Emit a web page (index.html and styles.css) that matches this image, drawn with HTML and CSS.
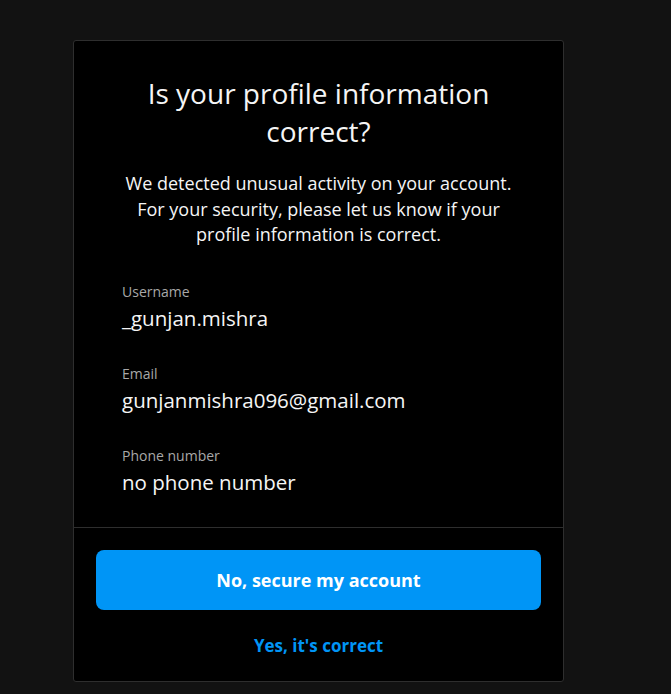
FILE: index.html
```html
<!DOCTYPE html>
<html>
<head>
  <title>Confirm your profile</title>
  <link rel="stylesheet" href="styles.css">
</head>
<body>
<div class="card">
  <div class="card-top">
    <h1 class="title">Is your profile information correct?</h1>
    <p class="intro">We detected unusual activity on your account. For your security, please let us know if your profile information is correct.</p>

    <div class="field">
      <div class="field-label">Username</div>
      <div class="field-value">_gunjan.mishra</div>
    </div>
    <div class="field">
      <div class="field-label">Email</div>
      <div class="field-value">gunjanmishra096@gmail.com</div>
    </div>
    <div class="field">
      <div class="field-label">Phone number</div>
      <div class="field-value">no phone number</div>
    </div>
  </div>

  <div class="card-actions">
    <button type="button" class="primary-button">No, secure my account</button>
    <button type="button" class="link-button">Yes, it's correct</button>
  </div>
</div>
</body>
</html>
```

FILE: styles.css
```css
body {
  margin: 0;
  background-color: #121212;
  font-family: "Open Sans", "Noto Sans", sans-serif;
  color: #f5f5f5;
}

.card {
  width: 489px;
  margin: 40px 0 0 73px;
  background-color: #000;
  border: 1px solid #2e2e2e;
  border-radius: 3px;
}

.card-top {
  padding: 33px 48px 30px 48px;
  border-bottom: 1px solid #2e2e2e;
}

.title {
  margin: 0 20px;
  font-size: 28px;
  font-weight: 400;
  line-height: 38px;
  text-align: center;
}

.intro {
  margin: 21px 0 33px 0;
  font-size: 18px;
  line-height: 25.5px;
  text-align: center;
}

.field {
  margin-bottom: 30px;
}

.field:last-child {
  margin-bottom: 0;
}

.field-label {
  font-size: 14px;
  line-height: 22px;
  color: #a8a8a8;
}

.field-value {
  font-size: 20.5px;
  line-height: 30px;
}

.card-actions {
  padding: 22px 22px 20px 22px;
  display: flex;
  flex-direction: column;
  align-items: stretch;
}

.primary-button {
  height: 60px;
  border: none;
  border-radius: 8px;
  background-color: #0095f6;
  color: #fff;
  font-family: inherit;
  font-size: 18px;
  font-weight: 700;
  cursor: pointer;
}

.link-button {
  margin-top: 21px;
  border: none;
  background-color: transparent;
  color: #0095f6;
  font-family: inherit;
  font-size: 17px;
  font-weight: 700;
  line-height: 28px;
  cursor: pointer;
}
```
